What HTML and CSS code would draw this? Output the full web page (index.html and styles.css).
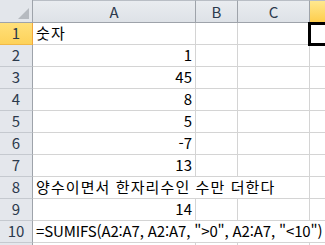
FILE: index.html
```html
<!DOCTYPE html>
<html lang="ko">
<head>
    <meta charset="UTF-8">
    <title>SUMIFS 예제</title>
    <link rel="stylesheet" href="styles.css">
</head>
<body>
    <div class="sheet">
        <div class="corner"><span class="corner-mark"></span></div>
        <div class="col-head">A</div>
        <div class="col-head">B</div>
        <div class="col-head">C</div>
        <div class="col-head selected">D</div>

        <div class="row-head selected">1</div>
        <div class="cell hangul">숫자</div><div class="cell"></div><div class="cell"></div><div class="cell active"></div>

        <div class="row-head">2</div>
        <div class="cell num">1</div><div class="cell"></div><div class="cell"></div><div class="cell"></div>

        <div class="row-head">3</div>
        <div class="cell num">45</div><div class="cell"></div><div class="cell"></div><div class="cell"></div>

        <div class="row-head">4</div>
        <div class="cell num">8</div><div class="cell"></div><div class="cell"></div><div class="cell"></div>

        <div class="row-head">5</div>
        <div class="cell num">5</div><div class="cell"></div><div class="cell"></div><div class="cell"></div>

        <div class="row-head">6</div>
        <div class="cell num">-7</div><div class="cell"></div><div class="cell"></div><div class="cell"></div>

        <div class="row-head">7</div>
        <div class="cell num">13</div><div class="cell"></div><div class="cell"></div><div class="cell"></div>

        <div class="row-head">8</div>
        <div class="cell hangul span3">양수이면서 한자리수인 수만 더한다</div><div class="cell"></div>

        <div class="row-head">9</div>
        <div class="cell num">14</div><div class="cell"></div><div class="cell"></div><div class="cell"></div>

        <div class="row-head">10</div>
        <div class="cell formula span4">=SUMIFS(A2:A7, A2:A7, "&gt;0", A2:A7, "&lt;10")</div>

        <div class="row-head">11</div>
        <div class="cell"></div><div class="cell"></div><div class="cell"></div><div class="cell"></div>
    </div>
</body>
</html>
```

FILE: styles.css
```css
html, body {
    margin: 0;
    padding: 0;
    background: #fff;
    overflow: hidden;
}
.sheet {
    display: grid;
    grid-template-columns: 33px 163px 42px 72px 60px;
    grid-template-rows: 23px repeat(11, 22px);
    font-family: 'Noto Sans CJK KR', sans-serif;
    font-size: 15px;
    color: #000;
}
.sheet > div {
    box-sizing: border-box;
    border-right: 1px solid #d4d4d4;
    border-bottom: 1px solid #d4d4d4;
    white-space: nowrap;
}
.corner {
    position: relative;
    background: #e3e6eb;
    border-right-color: #9ea3aa !important;
    border-bottom-color: #9ea3aa !important;
}
.corner-mark {
    position: absolute;
    right: 3px;
    bottom: 3px;
    width: 0;
    height: 0;
    border-left: 11px solid transparent;
    border-bottom: 11px solid #b6bac0;
}
.col-head {
    display: flex;
    align-items: center;
    justify-content: center;
    background: linear-gradient(#e9ecf0, #dee2e7);
    border-top: 1px solid #b9bec5;
    border-right-color: #9ea3aa !important;
    border-bottom-color: #9ea3aa !important;
    color: #2c3a4c;
}
.row-head {
    display: flex;
    align-items: flex-end;
    justify-content: center;
    padding-bottom: 1px;
    background: #e4e7ec;
    border-right-color: #9ea3aa !important;
    border-bottom-color: #c5c9cf !important;
    color: #2c3a4c;
}
.col-head.selected {
    background: linear-gradient(#ffe88f, #fecd4c);
    border-right-color: #f1b948 !important;
    border-bottom-color: #f1a63b !important;
}
.row-head.selected {
    background: linear-gradient(#ffe07a, #fdd25a);
    border-right-color: #f1a63b !important;
    border-bottom-color: #f1b948 !important;
}
.cell {
    display: flex;
    align-items: flex-end;
    padding: 0 3px 1px 3px;
    background: #fff;
}
.cell.num {
    justify-content: flex-end;
}
.cell.hangul {
    letter-spacing: 1.1px;
}
.cell.formula {
    letter-spacing: -0.15px;
}
.cell.span3 {
    grid-column: span 3;
}
.cell.span4 {
    grid-column: span 4;
}
/* active cell frame drawn over the gridlines */
.cell.active {
    position: relative;
}
.cell.active::after {
    content: "";
    position: absolute;
    left: -2px;
    top: -1px;
    right: -2px;
    bottom: -2px;
    border: 3px solid #000;
    box-sizing: border-box;
}
```
